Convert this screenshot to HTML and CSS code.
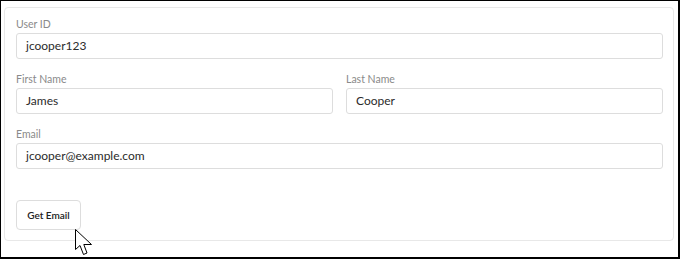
FILE: index.html
```html
<!DOCTYPE html>
<html lang="en">
<head>
<meta charset="utf-8">
<title>User form</title>
<link rel="stylesheet" href="styles.css">
</head>
<body>
<div class="frame">
  <div class="card">
    <div class="field">
      <label class="label">User ID</label>
      <div class="input">jcooper123</div>
    </div>
    <div class="row">
      <div class="field">
        <label class="label">First Name</label>
        <div class="input">James</div>
      </div>
      <div class="field">
        <label class="label">Last Name</label>
        <div class="input">Cooper</div>
      </div>
    </div>
    <div class="field">
      <label class="label">Email</label>
      <div class="input">jcooper@example.com</div>
    </div>
    <div class="actions">
      <button class="btn" type="button">Get Email</button>
    </div>
  </div>
  <svg class="cursor" width="20" height="27" viewBox="0 0 20 27">
    <path d="M0.5 0.5 L0.5 20.5 L5 16.5 L8.5 25.5 L12 24 L8.8 15.5 L16.5 15.5 Z" fill="#fff" stroke="#000" stroke-width="1" stroke-linejoin="miter"/>
  </svg>
</div>
</body>
</html>
```

FILE: styles.css
```css
* { box-sizing: border-box; }
html, body { margin: 0; padding: 0; background: #fff; }
body { font-family: Lato, "Open Sans", sans-serif; }

.frame {
  position: relative;
  width: 680px;
  height: 259px;
  border: 1px solid #000;
  border-right-width: 2px;
  border-bottom-width: 2px;
  padding: 6px 0 0 3px;
}

.card {
  width: 670px;
  height: 234px;
  border: 1px solid #e8e8e8;
  border-radius: 4px;
  padding: 8px 10px 0 11px;
  display: flex;
  flex-direction: column;
  gap: 12px;
}

.field {
  display: flex;
  flex-direction: column;
  min-width: 0;
}

.row {
  display: grid;
  grid-template-columns: 1fr 1fr;
  gap: 13px;
}

.label {
  font-size: 10.5px;
  line-height: 16px;
  color: #8a8a8a;
  margin-bottom: 1px;
}

.input {
  height: 26px;
  border: 1px solid #dddddd;
  border-radius: 3px;
  padding: 0 9px;
  font-size: 12px;
  line-height: 24px;
  color: #2b2b2b;
}

.actions {
  padding-top: 19px;
}

.btn {
  width: 65px;
  height: 30px;
  border: 1px solid #dddddd;
  border-radius: 4px;
  background: #fff;
  font-family: Lato, "Open Sans", sans-serif;
  font-size: 10px;
  font-weight: 600;
  color: #222;
  padding: 0;
}

.cursor {
  position: absolute;
  left: 74px;
  top: 228px;
}
```
